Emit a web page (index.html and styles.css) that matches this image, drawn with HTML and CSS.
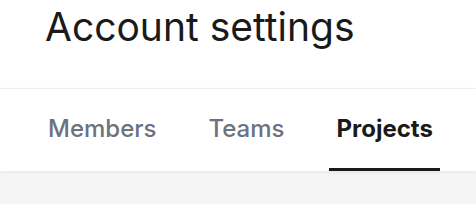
FILE: index.html
```html
<!DOCTYPE html>
<html>
<head>
<meta charset="utf-8">
<link rel="stylesheet" href="styles.css">
</head>
<body>
<header class="page-header">
  <h1 class="title">Account settings</h1>
</header>
<nav class="tabs">
  <a class="tab">Members</a>
  <a class="tab">Teams</a>
  <a class="tab active">Projects</a>
</nav>
<main class="content"></main>
</body>
</html>
```
FILE: styles.css
```css
html, body {
  margin: 0;
  padding: 0;
  height: 100%;
}
body {
  font-family: Inter, "Noto Sans", sans-serif;
  background: #f5f5f5;
  display: flex;
  flex-direction: column;
}
.page-header {
  background: #fff;
  height: 89px;
  padding: 0 45px;
  border-bottom: 1px solid #f2f2f2;
  box-sizing: border-box;
}
.title {
  margin: 0;
  font-size: 39px;
  font-weight: 400;
  color: #1a1a1a;
  line-height: 54px;
}
.tabs {
  background: #fff;
  height: 82px;
  flex: none;
  display: flex;
  align-items: stretch;
  padding: 0 41px;
  gap: 38px;
  box-shadow: 0 1px 4px rgba(0,0,0,0.07);
  position: relative;
}
.tab {
  display: flex;
  align-items: center;
  padding: 0 7px;
  font-size: 24px;
  font-weight: 500;
  color: #6b7280;
  border-bottom: 3px solid transparent;
}
.tab.active {
  color: #1a1a1a;
  font-weight: 700;
  border-bottom-color: #1a1a1a;
}
.content {
  flex: 1;
  background: #f5f5f5;
}
```
